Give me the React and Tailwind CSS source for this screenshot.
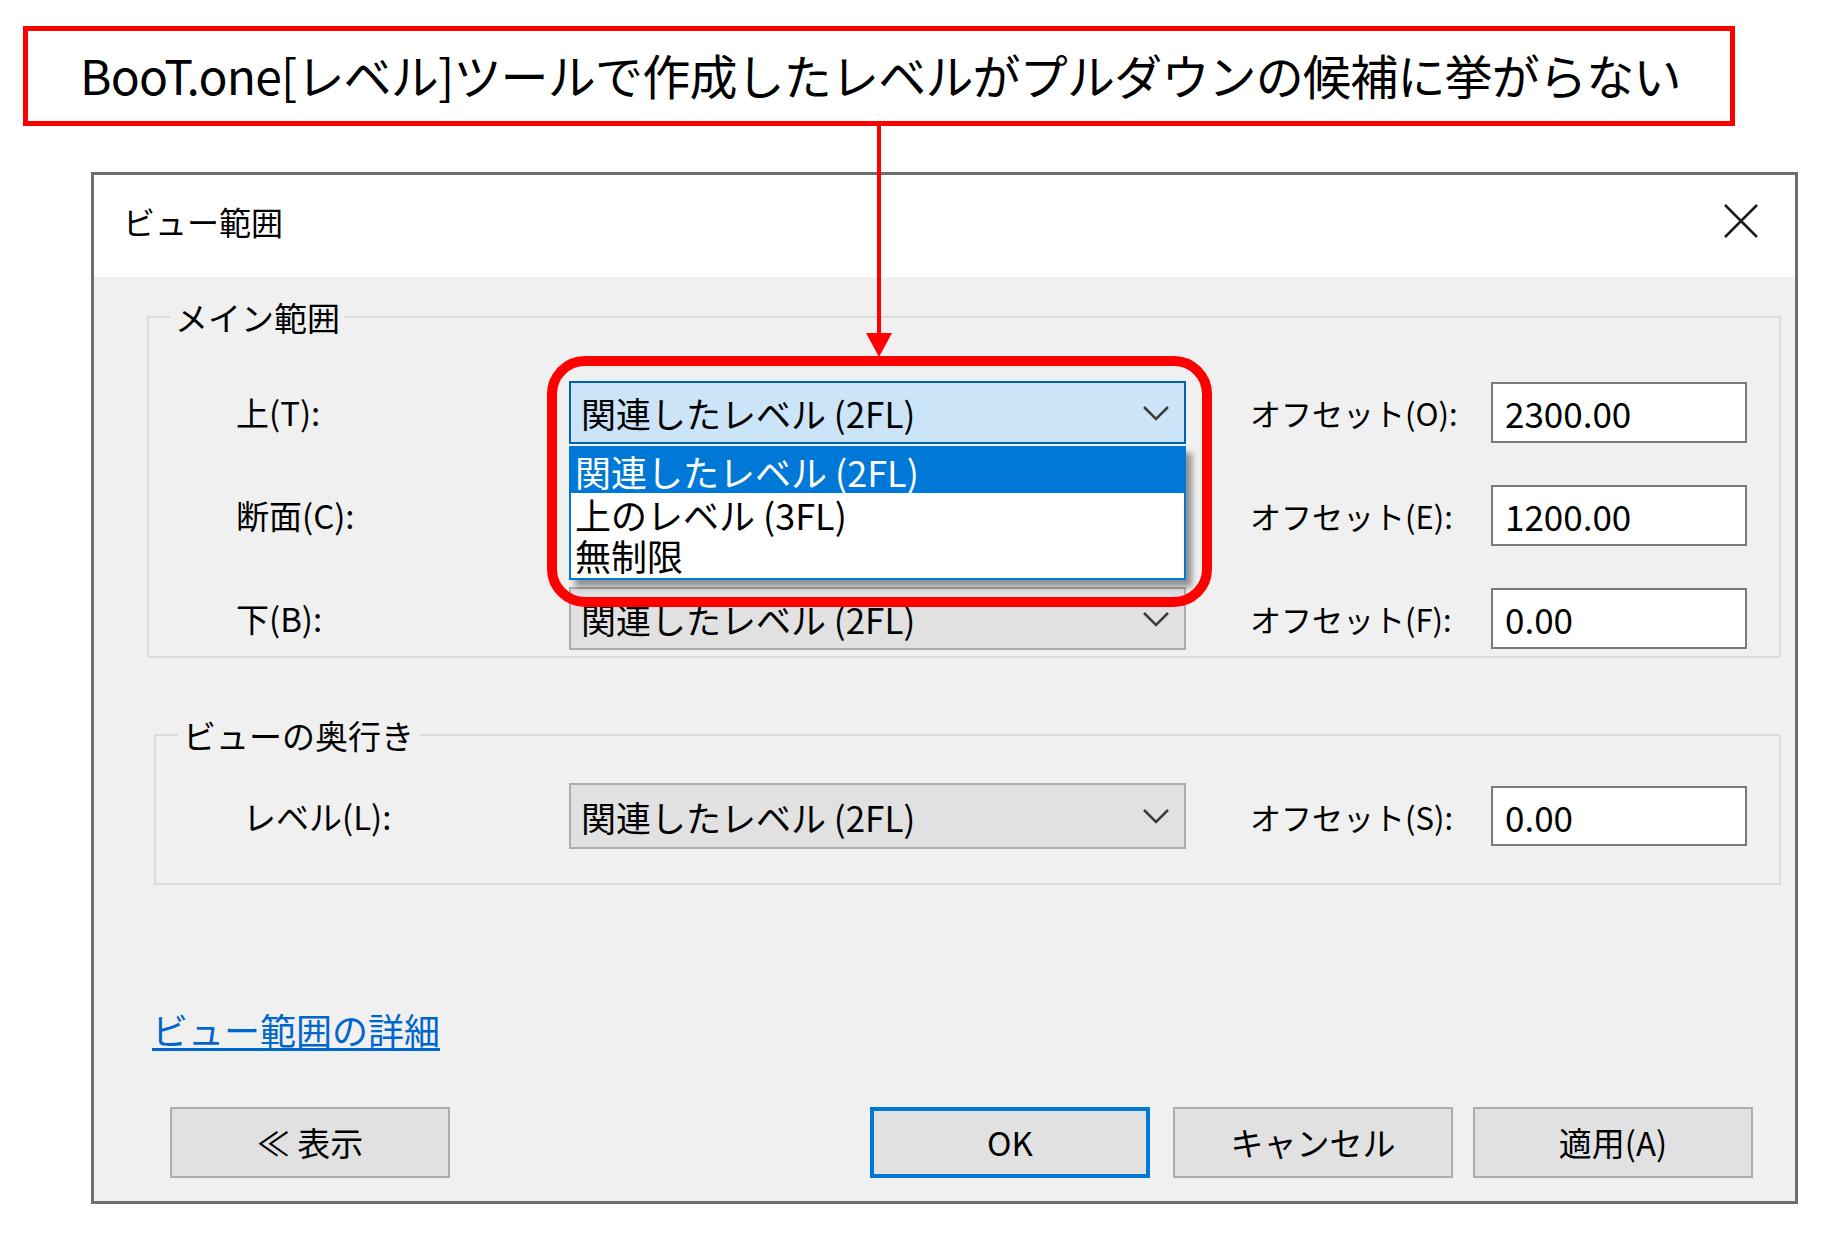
import React from 'react';

const jp = "font-['Noto_Sans_CJK_JP','Noto_Sans_CJK_SC',sans-serif]";

const Chevron = () => (
  <svg width="28" height="16" viewBox="0 0 28 16">
    <polyline points="2,2 14,14 26,2" fill="none" stroke="#3c3c3c" strokeWidth="2.5" />
  </svg>
);

const Combo = ({ text, focused, h }) => (
  <div
    className={`w-[617px] ${h} flex items-center justify-between pl-[10px] pr-[14px] border-2 ${
      focused ? 'bg-[#cce4f7] border-[#0063b1]' : 'bg-[#e1e1e1] border-[#adadad]'
    }`}
  >
    <span className="text-[35px] leading-none text-black">{text}</span>
    <Chevron />
  </div>
);

const Row = ({ label, labelW, combo, focused, off, val, comboH, inputH }) => (
  <div className="flex items-center">
    <div className={`${labelW} text-[33px] leading-none`}>{label}</div>
    <Combo text={combo} focused={focused} h={comboH} />
    <div className="w-[305px] pl-[64px] text-[31px] leading-none">{off}</div>
    <div className={`w-[256px] ${inputH} bg-white border-2 border-[#7a7a7a] flex items-center pl-[12px] text-[35px] leading-none`}>
      {val}
    </div>
  </div>
);

const Button = ({ children, primary }) => (
  <div
    className={`w-[280px] h-[71px] flex items-center justify-center bg-[#e1e1e1] text-[33px] leading-none ${
      primary ? 'border-[4px] border-[#0078d7]' : 'border-2 border-[#adadad]'
    }`}
  >
    {children}
  </div>
);

export default function App() {
  const main = [
    { label: '上(T):', combo: '関連したレベル (2FL)', focused: true, off: 'オフセット(O):', val: '2300.00' },
    { label: '断面(C):', combo: '関連したレベル (2FL)', off: 'オフセット(E):', val: '1200.00' },
    { label: '下(B):', combo: '関連したレベル (2FL)', off: 'オフセット(F):', val: '0.00' },
  ];

  return (
    <div className={`relative w-[1829px] h-[1238px] bg-white overflow-hidden text-black ${jp}`}>
      {/* callout title */}
      <div className="ml-[23px] mt-[26px] w-[1712px] h-[100px] border-[5px] border-[#ff0000] flex items-center pl-[52px] pb-[4px]">
        <span className="text-[48px] leading-none tracking-[-0.8px]">
          BooT.one[レベル]ツールで作成したレベルがプルダウンの候補に挙がらない
        </span>
      </div>

      {/* dialog */}
      <div className="ml-[91px] mt-[46px] w-[1707px] h-[1032px] border-[3px] border-[#6e6e6e] flex flex-col bg-[#f0f0f0]">
        <div className="h-[102px] shrink-0 bg-white flex items-center justify-between pl-[29px] pr-[36px] pb-[10px]">
          <span className="text-[32px] leading-none">ビュー範囲</span>
          <svg width="36" height="36" viewBox="0 0 36 36">
            <path d="M2 2 L34 34 M34 2 L2 34" stroke="#1a1a1a" strokeWidth="2.5" fill="none" />
          </svg>
        </div>

        <div className="flex flex-col">
          <fieldset className="ml-[53px] mt-[20px] w-[1634px] border-2 border-[#dcdcdc] p-0">
            <legend className="ml-[21px] px-[5px] text-[33px] leading-[40px]">メイン範囲</legend>
            <div className="pl-[87px] pt-[44px] pb-[6px] flex flex-col gap-[40px]">
              {main.map((r) => (
                <Row key={r.off} {...r} labelW="w-[333px]" comboH="h-[63px]" inputH="h-[61px]" />
              ))}
            </div>
          </fieldset>

          <fieldset className="ml-[60px] mt-[57px] w-[1627px] border-2 border-[#dcdcdc] p-0">
            <legend className="ml-[22px] px-[5px] text-[33px] leading-[40px]">ビューの奥行き</legend>
            <div className="pl-[87px] pt-[28px] pb-[34px]">
              <Row
                label="レベル(L):"
                labelW="w-[326px]"
                combo="関連したレベル (2FL)"
                off="オフセット(S):"
                val="0.00"
                comboH="h-[66px]"
                inputH="h-[60px]"
              />
            </div>
          </fieldset>

          <div className="ml-[58px] mt-[120px] h-[48px] flex items-center">
            <span className="text-[36px] leading-none text-[#0066cc] underline underline-offset-[3px]">ビュー範囲の詳細</span>
          </div>

          <div className="mt-[54px] pl-[76px] pr-[42px] flex items-center">
            <Button>≪ 表示</Button>
            <div className="flex-1" />
            <Button primary>OK</Button>
            <div className="w-[23px]" />
            <Button>キャンセル</Button>
            <div className="w-[20px]" />
            <Button>適用(A)</Button>
          </div>
        </div>
      </div>

      {/* open dropdown list */}
      <div className="absolute left-[569px] top-[446px] w-[617px] h-[134px] bg-white border-2 border-[#0078d7] shadow-[6px_7px_6px_rgba(0,0,0,0.4)] flex flex-col">
        <div className="h-[45px] bg-[#0078d7] text-white text-[36px] leading-none flex items-center pl-[4px]">関連したレベル (2FL)</div>
        <div className="h-[41px] text-[36px] leading-none flex items-center pl-[4px]">上のレベル (3FL)</div>
        <div className="h-[41px] text-[36px] leading-none flex items-center pl-[4px]">無制限</div>
      </div>

      {/* red highlight */}
      <div className="absolute left-[547px] top-[356px] w-[665px] h-[251px] border-[10px] border-[#ff0000] rounded-[38px]" />

      {/* arrow */}
      <div className="absolute left-[877px] top-[126px] w-[4px] h-[212px] bg-[#ff0000]" />
      <svg className="absolute left-[866px] top-[333px]" width="26" height="24" viewBox="0 0 26 24">
        <polygon points="0,0 26,0 13,24" fill="#ff0000" />
      </svg>
    </div>
  );
}
